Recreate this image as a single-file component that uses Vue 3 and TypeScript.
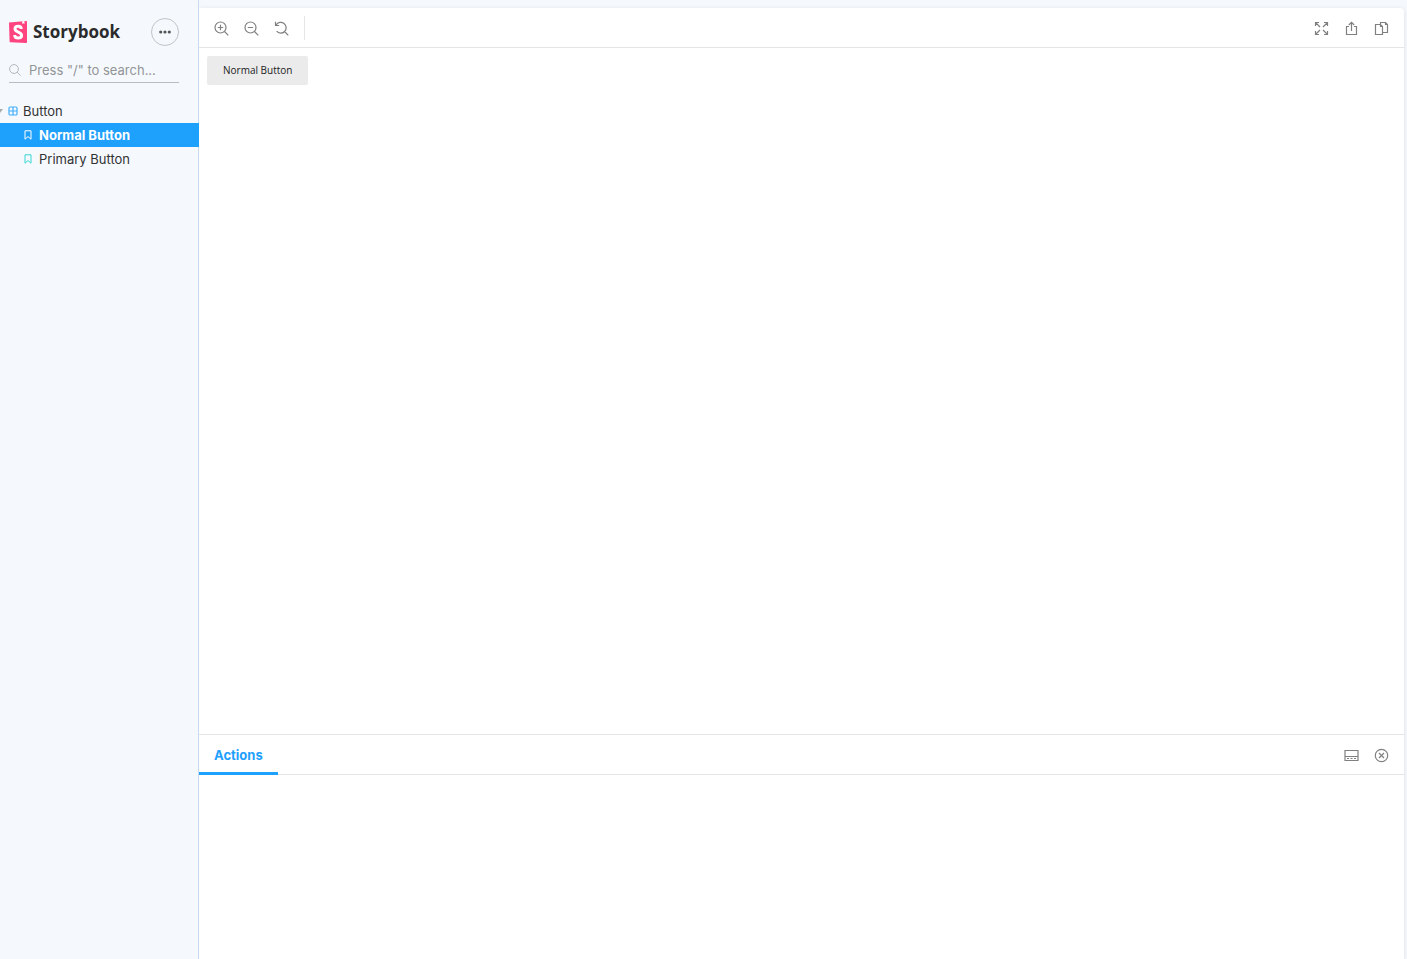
<script setup lang="ts">
import { ref } from 'vue'

interface Story {
  id: string
  name: string
}

const stories: Story[] = [
  { id: 'normal', name: 'Normal Button' },
  { id: 'primary', name: 'Primary Button' },
]
const selected = ref('normal')
const query = ref('')
</script>

<template>
  <div class="shell">
    <aside class="sidebar">
      <header class="brand-row">
        <a href="#" class="brand">
          <svg class="logo" viewBox="0 0 18 22" aria-hidden="true">
            <path d="M0 1.4 17.2 0q.8 0 .8.8v20.4q0 .8-.8.8L1.4 21.3q-.8 0-.8-.9Z" fill="#ff4480" />
            <path d="M13.2.3 15.4.1l.1 2.9-1-.8-1.2.8Z" fill="#fff" />
            <path
              d="M12.2 8C12.2 6.1 11.1 5.3 9.2 5.3 7.2 5.3 6 6.2 6 7.8c0 4 6.6 2.6 6.6 6.5 0 1.8-1.3 2.8-3.4 2.8-2.2 0-3.5-.9-3.5-3"
              fill="none" stroke="#fff" stroke-width="3"
            />
          </svg>
          <span>Storybook</span>
        </a>
        <button class="menu" type="button" aria-label="Shortcuts">
          <svg width="12" height="4" viewBox="0 0 12 4" aria-hidden="true">
            <g fill="#555">
              <circle cx="1.7" cy="2" r="1.6" />
              <circle cx="6" cy="2" r="1.6" />
              <circle cx="10.3" cy="2" r="1.6" />
            </g>
          </svg>
        </button>
      </header>

      <label class="search">
        <svg width="12" height="12" viewBox="0 0 12 12" fill="none" stroke="#b4b6b8" aria-hidden="true">
          <circle cx="5" cy="5" r="4.4" />
          <path d="m8.2 8.2 3.4 3.4" />
        </svg>
        <input v-model="query" type="text" placeholder="Press &quot;/&quot; to search..." aria-label="Search stories">
      </label>

      <nav class="tree">
        <a href="#" class="node group">
          <svg class="caret" width="3" height="4" viewBox="0 0 3 4" aria-hidden="true">
            <path d="M-3 0h6L0 4Z" fill="#aaa" />
          </svg>
          <svg width="10" height="10" viewBox="0 0 10 10" fill="none" stroke="#41aefb" stroke-width="1.2" aria-hidden="true">
            <rect x="1" y="1" width="8" height="8" rx="1.3" />
            <path d="M5 1v8M1 5h8" />
          </svg>
          <span>Button</span>
        </a>
        <a
          v-for="story in stories"
          :key="story.id"
          href="#"
          class="node story"
          :class="{ active: selected === story.id }"
          @click.prevent="selected = story.id"
        >
          <svg width="8" height="10" viewBox="0 0 8 10" fill="none" stroke="currentColor" aria-hidden="true">
            <path d="M1 .8h6v8.4L4 6.6 1 9.2Z" />
          </svg>
          <span>{{ story.name }}</span>
        </a>
      </nav>
    </aside>

    <main class="content">
      <div class="bar">
        <div class="tools">
          <button type="button" aria-label="Zoom in">
            <svg viewBox="0 0 15 15"><circle cx="6.5" cy="6.5" r="5.5" /><path d="m10.5 10.5 3.8 3.8M6.5 3.8v5.4M3.8 6.5h5.4" /></svg>
          </button>
          <button type="button" aria-label="Zoom out">
            <svg viewBox="0 0 15 15"><circle cx="6.5" cy="6.5" r="5.5" /><path d="m10.5 10.5 3.8 3.8M3.8 6.5h5.4" /></svg>
          </button>
          <button type="button" aria-label="Reset zoom">
            <svg viewBox="0 0 15 15"><path d="M2.1 4A5.4 5.4 0 1 1 2.6 10.2M1.5.8v3.7h3.7M10.5 10.5l3.8 3.8" /></svg>
          </button>
          <span class="divider" />
        </div>
        <div class="tools">
          <button type="button" aria-label="Go full screen">
            <svg viewBox="0 0 15 15"><path d="M1.5 5V1.5H5M10 1.5h3.5V5M13.5 10v3.5H10M5 13.5H1.5V10M1.5 1.5l4.5 4.5M13.5 1.5 9 6M13.5 13.5 9 9M1.5 13.5 6 9" /></svg>
          </button>
          <button type="button" aria-label="Open canvas in new tab">
            <svg viewBox="0 0 15 15"><path d="M5 5.5H2.5v8h10v-8H10M7.5 10V1.4M4.8 4l2.7-2.7L10.2 4" /></svg>
          </button>
          <button type="button" aria-label="Copy canvas link">
            <svg viewBox="0 0 15 15"><path d="M1.5 3.5h5l2 2v8h-7ZM6.5 3.5v2h2M6.5 3.5v-2h5l2 2v8h-5M11.5 1.5v2h2" /></svg>
          </button>
        </div>
      </div>

      <section class="preview">
        <button class="sample" type="button">Normal Button</button>
      </section>

      <section class="panel">
        <div class="bar">
          <button class="tab" type="button">Actions</button>
          <div class="tools">
            <button type="button" aria-label="Change addon orientation">
              <svg viewBox="0 0 15 15"><path d="M1 2.5h13v10H1ZM1 8.5h13M3 10.5h2M6.5 10.5h2M10 10.5h2" /></svg>
            </button>
            <button type="button" aria-label="Hide addons">
              <svg viewBox="0 0 15 15"><circle cx="7.5" cy="7.5" r="6.2" /><path d="m5 5 5 5M10 5l-5 5" /></svg>
            </button>
          </div>
        </div>
      </section>
    </main>
  </div>
</template>

<style>
body {
  margin: 0;
}
</style>

<style scoped>
.shell {
  display: flex;
  height: 100vh;
  overflow: hidden;
  box-sizing: border-box;
  padding-right: 3px;
  background: #f5f9fe;
  color: #333;
  font: 13px/16px Inter, "Liberation Sans", sans-serif;
}
button {
  padding: 0;
  border: 0;
  background: none;
  font: inherit;
  cursor: pointer;
}
a {
  color: inherit;
  text-decoration: none;
}
.sidebar {
  flex: 0 0 199px;
  min-width: 0;
  box-sizing: border-box;
  border-right: 1px solid #c9dcef;
}
.brand-row {
  display: flex;
  align-items: center;
  justify-content: space-between;
  padding: 18px 19px 0 9px;
}
.brand {
  display: flex;
  align-items: center;
  gap: 6px;
  color: #2b2b2b;
  font: 700 17px/24px "Open Sans", sans-serif;
}
.logo {
  width: 18px;
  height: 22px;
}
.menu {
  display: flex;
  align-items: center;
  justify-content: center;
  box-sizing: border-box;
  width: 28px;
  height: 28px;
  border: 1px solid #bfc4c9;
  border-radius: 50%;
}
.search {
  display: flex;
  align-items: center;
  gap: 8px;
  height: 24px;
  margin: 12px 19px 0 9px;
  border-bottom: 1px solid #b9bdc1;
}
.search input {
  flex: 1;
  min-width: 0;
  padding: 0;
  border: 0;
  outline: 0;
  background: none;
  color: #333;
  font: inherit;
}
.search input::placeholder {
  color: #929496;
  opacity: 1;
}
.tree {
  margin-top: 16px;
}
.node {
  display: flex;
  align-items: center;
  height: 24px;
}
.group {
  gap: 5px;
}
.story {
  gap: 7px;
  padding-left: 24px;
  margin-right: -1px;
}
.story svg {
  color: #37d5d3;
}
.active {
  background: #1ea0fd;
  color: #fff;
  font-weight: 700;
}
.active svg {
  color: #fff;
}
.content {
  display: flex;
  flex: 1;
  flex-direction: column;
  min-width: 0;
  margin-top: 8px;
  border-radius: 0 4px 0 0;
  background: #fff;
  box-shadow: 0 1px 5px rgba(0, 0, 0, 0.1);
  clip-path: inset(-8px -8px 0 0);
}
.bar {
  display: flex;
  align-items: center;
  justify-content: space-between;
  height: 39px;
  padding-right: 15px;
  border-bottom: 1px solid #e5e5e5;
}
.tools {
  display: flex;
  align-items: center;
  gap: 15px;
}
.tools:first-child {
  padding-left: 15px;
}
.tools button {
  padding-top: 1px;
}
.tools svg {
  display: block;
  width: 15px;
  height: 15px;
  fill: none;
  stroke: #808080;
  stroke-width: 1.2;
}
.divider {
  width: 1px;
  height: 24px;
  background: #e5e5e5;
}
.preview {
  flex: 1;
  padding: 8px;
}
.sample {
  display: block;
  padding: 7px 16px 8px;
  border-radius: 2px;
  background: #ebebeb;
  color: #222;
  font: 10px/14px "Open Sans", sans-serif;
}
.panel {
  height: 224px;
  border-top: 1px solid #e5e5e5;
}
.tab {
  align-self: stretch;
  margin-bottom: -1px;
  padding: 3px 15px 0;
  border-bottom: 3px solid #1ea0fd;
  color: #1ea0fd;
  font-weight: 700;
}
</style>
